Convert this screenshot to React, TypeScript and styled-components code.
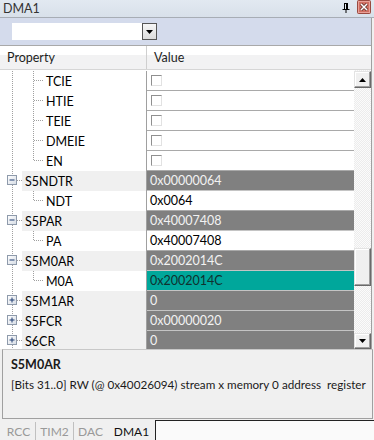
import React from 'react';
import styled, { createGlobalStyle } from 'styled-components';

const GlobalStyle = createGlobalStyle`
  html, body {
    margin: 0;
    padding: 0;
    background: #f0f0f0;
  }
  body {
    font-family: Lato, "Open Sans", sans-serif;
    font-size: 12px;
  }
`;

const Window = styled.div`
  width: 374px;
  height: 440px;
  display: flex;
  flex-direction: column;
  background: #f0f0f0;
  overflow: hidden;
`;

const TitleBar = styled.div`
  height: 17px;
  display: flex;
  align-items: center;
  padding: 0 3px 0 3px;
  background: linear-gradient(#e2e9f1, #d8e0ea);
  border-bottom: 1px solid #a7adb5;
  color: #333;
  font-size: 12.5px;
`;

const TitleText = styled.span`
  flex: 1;
`;

const TitleIcons = styled.div`
  display: flex;
  align-items: flex-start;
  gap: 7px;
  height: 17px;
`;

const Frame = styled.div`
  width: 371px;
  border-right: 1px solid #a0a0a0;
  display: flex;
  flex-direction: column;
`;

const Toolbar = styled.div`
  height: 27px;
  display: flex;
  align-items: center;
  padding-left: 12px;
  background: #d4dbec;
  border-bottom: 1px solid #a9a9a9;
`;

const Combo = styled.div`
  width: 145px;
  height: 17px;
  background: #fff;
  display: flex;
  justify-content: flex-end;
`;

const ComboButton = styled.div`
  width: 13px;
  height: 15px;
  border: 1px solid #555;
  background: linear-gradient(#f6f6f6, #dcdcdc);
  display: flex;
  align-items: center;
  justify-content: center;
`;

const Header = styled.div`
  height: 23px;
  display: flex;
  font-size: 12.5px;
  background: linear-gradient(#ffffff 0%, #ffffff 40%, #f2f2f3 41%, #f2f2f3 100%);
  border-bottom: 1px solid #d6d6d6;
`;

const HeaderCell = styled.div<{ $w?: number }>`
  ${(p) => (p.$w ? `width: ${p.$w}px;` : 'flex: 1;')}
  display: flex;
  align-items: center;
  padding-left: 7px;
  box-sizing: border-box;
  color: #1e1e1e;
  border-right: ${(p) => (p.$w ? '1px solid #cfcfcf' : 'none')};
`;

const GridBody = styled.div`
  height: 279px;
  display: flex;
  background: #fff;
`;

const Rows = styled.div`
  flex: 1;
  overflow: hidden;
  padding-top: 1px;
  font-size: 12.5px;
`;

const Row = styled.div`
  height: 20px;
  display: flex;
`;

const PropCell = styled.div`
  width: 146px;
  border-right: 1px solid #a0a0a0;
  display: flex;
  background: #fff;
`;

const PropLabel = styled.div<{ $reg?: boolean }>`
  flex: 1;
  display: flex;
  align-items: center;
  padding-left: ${(p) => (p.$reg ? 3 : 2)}px;
  background: ${(p) => (p.$reg ? '#f0f0f0' : '#fff')};
  color: #000;
  white-space: nowrap;
`;

type Tone = 'field' | 'reg' | 'selected';

const ValueCell = styled.div<{ $tone: Tone }>`
  flex: 1;
  display: flex;
  align-items: center;
  padding-left: 3px;
  box-sizing: border-box;
  border-bottom: 1px solid ${(p) => (p.$tone === 'field' ? '#a9a9a9' : '#c4c4c4')};
  background: ${(p) =>
    p.$tone === 'reg' ? '#808080' : p.$tone === 'selected' ? '#00a79b' : '#fff'};
  color: ${(p) => (p.$tone === 'reg' ? '#f2f2f2' : p.$tone === 'selected' ? '#10302e' : '#000')};
`;

const CheckBox = styled.span`
  width: 11px;
  height: 11px;
  box-sizing: border-box;
  margin-left: 1px;
  border-style: solid;
  border-width: 1px;
  border-color: #8f8f8f #e2e2e2 #e2e2e2 #8f8f8f;
  background: #fff;
`;

const ScrollBar = styled.div`
  width: 17px;
  display: flex;
  flex-direction: column;
  padding-top: 1px;
  background-color: #fbfbfb;
  background-image: conic-gradient(#ececec 25%, #fbfbfb 0 50%, #ececec 0 75%, #fbfbfb 0);
  background-size: 2px 2px;
`;

const ScrollButton = styled.div<{ $h: number }>`
  height: ${(p) => p.$h}px;
  box-sizing: border-box;
  background: #f0f0f0;
  border-style: solid;
  border-width: 1px;
  border-color: #e3e3e3 #696969 #696969 #e3e3e3;
  box-shadow: inset -1px -1px 0 #a0a0a0, inset 1px 1px 0 #fff;
  display: flex;
  align-items: center;
  justify-content: center;
`;

const Track = styled.div`
  flex: 1;
  display: flex;
  flex-direction: column;
`;

const Thumb = styled(ScrollButton)<{ $top: number }>`
  margin-top: ${(p) => p.$top}px;
`;

const Description = styled.div`
  margin: 0 1px 0 2px;
  height: 70px;
  box-sizing: border-box;
  border: 1px solid #a0a0a0;
  border-top-color: #c8c8c8;
  padding: 7px 0 0 8px;
  background: #f0f0f0;
  color: #1a1a1a;
  font-size: 12.5px;
`;

const DescTitle = styled.div`
  font-weight: bold;
  line-height: 16px;
`;

const DescText = styled.div`
  line-height: 16px;
  margin-top: 3px;
  font-size: 11.7px;
  white-space: nowrap;
`;

const TabStrip = styled.div`
  flex: 1;
  display: flex;
  align-items: stretch;
  padding-left: 2px;
  margin-top: 1px;
  font-size: 12px;
`;

const Tab = styled.div<{ $w: number; $active?: boolean; $sep?: boolean }>`
  width: ${(p) => p.$w}px;
  display: flex;
  align-items: center;
  justify-content: center;
  box-sizing: border-box;
  padding-top: ${(p) => (p.$active ? 2 : 0)}px;
  margin-top: ${(p) => (p.$active ? 0 : 2)}px;
  color: ${(p) => (p.$active ? '#111' : '#999')};
  border-right: 1px solid ${(p) => (p.$active ? '#222' : p.$sep ? '#c0c0c0' : 'transparent')};
`;

const TabFill = styled.div`
  flex: 1;
  border-top: 1px solid #222;
  background: #fafafa;
`;

type RowData = {
  name: string;
  tone: Tone;
  reg?: boolean;
  open?: boolean;
  last?: boolean;
  value?: string;
  check?: boolean;
};

const rows: RowData[] = [
  { name: 'TCIE', tone: 'field', check: true },
  { name: 'HTIE', tone: 'field', check: true },
  { name: 'TEIE', tone: 'field', check: true },
  { name: 'DMEIE', tone: 'field', check: true },
  { name: 'EN', tone: 'field', check: true, last: true },
  { name: 'S5NDTR', tone: 'reg', reg: true, open: true, value: '0x00000064' },
  { name: 'NDT', tone: 'field', last: true, value: '0x0064' },
  { name: 'S5PAR', tone: 'reg', reg: true, open: true, value: '0x40007408' },
  { name: 'PA', tone: 'field', last: true, value: '0x40007408' },
  { name: 'S5M0AR', tone: 'reg', reg: true, open: true, value: '0x2002014C' },
  { name: 'M0A', tone: 'selected', last: true, value: '0x2002014C' },
  { name: 'S5M1AR', tone: 'reg', reg: true, value: '0' },
  { name: 'S5FCR', tone: 'reg', reg: true, value: '0x00000020' },
  { name: 'S6CR', tone: 'reg', reg: true, value: '0' },
];

const tabs = [
  { label: 'RCC', w: 34, sep: true },
  { label: 'TIM2', w: 38, sep: true },
  { label: 'DAC', w: 34 },
  { label: 'DMA1', w: 48, active: true },
];

const DOT = '#a0a0a0';

const RegGuides = ({ open }: { open?: boolean }) => (
  <svg width="22" height="20">
    <line x1="12.5" y1="0" x2="12.5" y2="20" stroke={DOT} strokeDasharray="1 1" />
    <line x1="17" y1="9.5" x2="22" y2="9.5" stroke={DOT} strokeDasharray="1 1" />
    <defs>
      <linearGradient id="bx" x1="0" y1="0" x2="1" y2="1">
        <stop offset="0" stopColor="#ffffff" />
        <stop offset="1" stopColor="#d6dce4" />
      </linearGradient>
    </defs>
    <rect x="7.5" y="4.5" width="9" height="9" fill="url(#bx)" stroke="#8e9aab" />
    <line x1="9.5" y1="9" x2="14.5" y2="9" stroke="#1e3c72" />
    {!open && <line x1="12" y1="6.5" x2="12" y2="11.5" stroke="#1e3c72" />}
  </svg>
);

const FieldGuides = ({ last }: { last?: boolean }) => (
  <svg width="44" height="20">
    <line x1="12.5" y1="0" x2="12.5" y2="20" stroke={DOT} strokeDasharray="1 1" />
    <line x1="33.5" y1="0" x2="33.5" y2={last ? 10 : 20} stroke={DOT} strokeDasharray="1 1" />
    <line x1="34" y1="9.5" x2="44" y2="9.5" stroke={DOT} strokeDasharray="1 1" />
  </svg>
);

const Arrow = ({ up }: { up?: boolean }) => (
  <svg width="7" height="4" viewBox="0 0 7 4">
    <path d={up ? 'M0 4 L3.5 0 L7 4 Z' : 'M0 0 L7 0 L3.5 4 Z'} fill="#000" />
  </svg>
);

const PinIcon = () => (
  <svg width="8" height="10" viewBox="0 0 8 10" style={{ marginTop: 3 }}>
    <path d="M2 0.5 H6 M2.5 0.5 V6 M5.5 0.5 V6 M0.5 6.5 H7.5 M4 6.5 V10" stroke="#000" strokeWidth="1" fill="none" />
    <rect x="4" y="1" width="1.5" height="5" fill="#000" />
  </svg>
);

const CloseIcon = () => (
  <svg width="14" height="14" viewBox="0 0 14 14">
    <rect x="0.5" y="0.5" width="13" height="13" rx="1" fill="#d06f62" stroke="#9a4a40" />
    <rect x="1.5" y="1.5" width="11" height="11" fill="none" stroke="#e8a097" />
    <path d="M4 4 L10 10 M10 4 L4 10" stroke="#5a2a24" strokeWidth="3" />
    <path d="M4 4 L10 10 M10 4 L4 10" stroke="#fff" strokeWidth="1.5" />
  </svg>
);

const App = () => (
  <>
    <GlobalStyle />
    <Window>
      <TitleBar>
        <TitleText>DMA1</TitleText>
        <TitleIcons>
          <PinIcon />
          <CloseIcon />
        </TitleIcons>
      </TitleBar>
      <Frame>
        <Toolbar>
          <Combo>
            <ComboButton>
              <Arrow />
            </ComboButton>
          </Combo>
        </Toolbar>
        <Header>
          <HeaderCell $w={147}>Property</HeaderCell>
          <HeaderCell>Value</HeaderCell>
        </Header>
        <GridBody>
          <Rows>
            {rows.map((r) => (
              <Row key={r.name}>
                <PropCell>
                  {r.reg ? <RegGuides open={r.open} /> : <FieldGuides last={r.last} />}
                  <PropLabel $reg={r.reg}>{r.name}</PropLabel>
                </PropCell>
                <ValueCell $tone={r.tone}>{r.check ? <CheckBox /> : r.value}</ValueCell>
              </Row>
            ))}
          </Rows>
          <ScrollBar>
            <ScrollButton $h={17}>
              <Arrow up />
            </ScrollButton>
            <Track>
              <Thumb $h={38} $top={160} />
            </Track>
            <ScrollButton $h={16}>
              <Arrow />
            </ScrollButton>
          </ScrollBar>
        </GridBody>
      </Frame>
      <Description>
        <DescTitle>S5M0AR</DescTitle>
        <DescText>[Bits 31..0] RW (@ 0x40026094) stream x memory 0 address&nbsp; register</DescText>
      </Description>
      <TabStrip>
        {tabs.map((t) => (
          <Tab key={t.label} $w={t.w} $sep={t.sep} $active={t.active}>
            {t.label}
          </Tab>
        ))}
        <TabFill />
      </TabStrip>
    </Window>
  </>
);

export default App;
